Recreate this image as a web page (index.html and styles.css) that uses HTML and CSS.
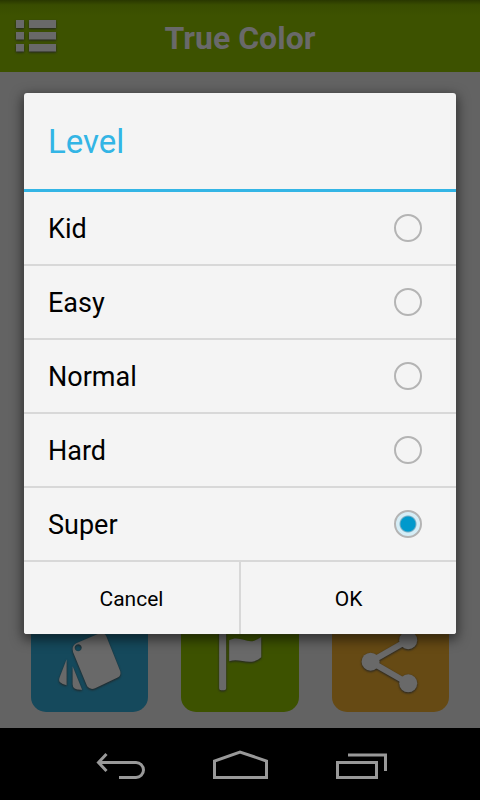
FILE: index.html
```html
<!DOCTYPE html>
<html lang="en">
<head>
<meta charset="utf-8">
<meta name="viewport" content="width=device-width, initial-scale=1">
<title>True Color</title>
<link rel="stylesheet" href="styles.css">
</head>
<body>
<div class="screen">
  <header class="bar">
    <button class="menu" type="button" aria-label="Menu">
      <svg class="icon" width="40" height="36" viewBox="0 0 40 36"><path d="M0 0h8v8H0zM13 0h27v8H13zM0 12h8v7.500H0zM13 12h27v7.500H13zM0 24h8v7.500H0zM13 24h27v7.500H13z"/></svg>
    </button>
    <h1 class="app-title">True Color</h1>
  </header>
  <main class="content">
    <div class="tiles">
      <button class="tile tile-blue" type="button" aria-label="Colors">
        <svg class="icon" viewBox="0 0 117 117"><path fill-rule="evenodd" d="M45 48L69 38Q73 37 75 41L89 76Q90 80 87 82L64 93Q59 95 56 91L42 57Q40 51 45 48zM47 49a3.500 3.500 0 1 0 .1 0z"/><path d="M35.500 64V90Q31 89 29 87Q27 85 29 81zM41.500 71L51 94.500Q41.500 95 41.500 89z"/></svg>
      </button>
      <button class="tile tile-green" type="button" aria-label="Flag">
        <svg class="icon" viewBox="0 0 117 117"><path d="M38 34h7v59q0 2-2 2h-3q-2 0-2-2zM48 45C58 40 65 48 73 45.500Q77 44 80 42V62C68 72 60 62 48 66z"/></svg>
      </button>
      <button class="tile tile-orange" type="button" aria-label="Share">
        <svg class="icon" viewBox="0 0 117 117"><path class="link" d="M76 45L38.500 66.500L76 88"/><circle cx="76" cy="45" r="9"/><circle cx="38.500" cy="66.500" r="9"/><circle cx="76" cy="88" r="9"/></svg>
      </button>
    </div>
  </main>
  <nav class="system">
    <button class="key" type="button" aria-label="Back"><svg class="line" width="64" height="40" viewBox="0 0 64 40"><path d="M32 33.500H49A7.500 7.500 0 0 0 49 18.500H11M19.500 10L11.500 18.500L19.500 27"/></svg></button>
    <button class="key" type="button" aria-label="Home"><svg class="line" width="64" height="40" viewBox="0 0 64 40"><path d="M6.500 33.500V17L32 8L58.500 17V33.500z"/></svg></button>
    <button class="key" type="button" aria-label="Recent apps"><svg class="line" width="64" height="40" viewBox="0 0 64 40"><path d="M8.500 18.500H47.500V33.500H8.500zM19 11H56.500V27"/></svg></button>
  </nav>
  <div class="overlay">
    <form class="dialog" role="dialog" aria-labelledby="level-title">
      <h2 class="dialog-title" id="level-title">Level</h2>
      <label class="option">Kid<input type="radio" name="level"></label>
      <label class="option">Easy<input type="radio" name="level"></label>
      <label class="option">Normal<input type="radio" name="level"></label>
      <label class="option">Hard<input type="radio" name="level"></label>
      <label class="option">Super<input type="radio" name="level" checked></label>
      <div class="actions">
        <button class="action" type="button">Cancel</button>
        <button class="action" type="button">OK</button>
      </div>
    </form>
  </div>
</div>
</body>
</html>
```
FILE: styles.css
```css
* {
  box-sizing: border-box;
}

body {
  margin: 0;
  background: #636363;
  font-family: Roboto, "Noto Sans", sans-serif;
}

button {
  margin: 0;
  padding: 0;
  border: 0;
  background: none;
  font: inherit;
  color: inherit;
}

svg {
  display: block;
}

.screen {
  position: relative;
  display: flex;
  flex-direction: column;
  min-height: 100vh;
}

.bar {
  display: grid;
  grid-template-columns: 40px 1fr 40px;
  align-items: center;
  height: 72px;
  padding: 4px 16px 0;
  background: linear-gradient(#293700, #394d00 5px, #3d5200 16px);
}

.icon {
  fill: #696969;
  filter: drop-shadow(0 1px 1px #222);
}

.app-title {
  margin: 0;
  text-align: center;
  font-size: 32px;
  line-height: 40px;
  font-weight: 700;
  color: #696969;
}

.content {
  flex: 1;
  display: flex;
  flex-direction: column;
  justify-content: flex-end;
  padding: 16px 31px;
}

.tiles {
  display: grid;
  grid-template-columns: repeat(3, 1fr);
  gap: 33px;
}

.tile {
  border-radius: 15px;
}

.tile-blue {
  background: #15495c;
}

.tile-green {
  background: #3d5200;
}

.tile-orange {
  background: #664a14;
}

.link {
  fill: none;
  stroke: #696969;
  stroke-width: 6;
}

.system {
  display: flex;
  justify-content: center;
  align-items: center;
  gap: 57px;
  height: 72px;
  background: #000;
}

.line {
  fill: none;
  stroke: #999;
  stroke-width: 3;
}

.overlay {
  position: absolute;
  inset: 0 0 72px;
  display: flex;
  align-items: center;
  padding: 0 24px 2px;
}

.dialog {
  flex: 1;
  overflow: hidden;
  border-radius: 3px;
  background: #f4f4f4;
  box-shadow: 0 0 1px #505050, 0 4px 12px 2px rgba(0, 0, 0, 0.5);
  color: #000;
}

.dialog-title {
  margin: 0;
  padding: 2px 24px 0;
  border-bottom: 3px solid #33b5e5;
  font-size: 33px;
  line-height: 94px;
  font-weight: 400;
  color: #33b5e5;
}

.option {
  display: flex;
  justify-content: space-between;
  align-items: center;
  height: 74px;
  padding: 2px 34px 0 24px;
  border-bottom: 2px solid #d8d8d8;
  font-size: 27px;
}

.option input {
  appearance: none;
  width: 28px;
  height: 28px;
  margin: 0 0 2px;
  border: 2px solid #b4b4b4;
  border-radius: 50%;
}

.option input:checked {
  background: radial-gradient(circle, #0099cc 7px, #78aec4 8px, #d5edf6 9px);
}

.actions {
  display: grid;
  grid-template-columns: 1fr 1fr;
  gap: 2px;
  background: #d8d8d8;
}

.action {
  height: 72px;
  padding-top: 2px;
  background: #f4f4f4;
  font-size: 21px;
}
```
